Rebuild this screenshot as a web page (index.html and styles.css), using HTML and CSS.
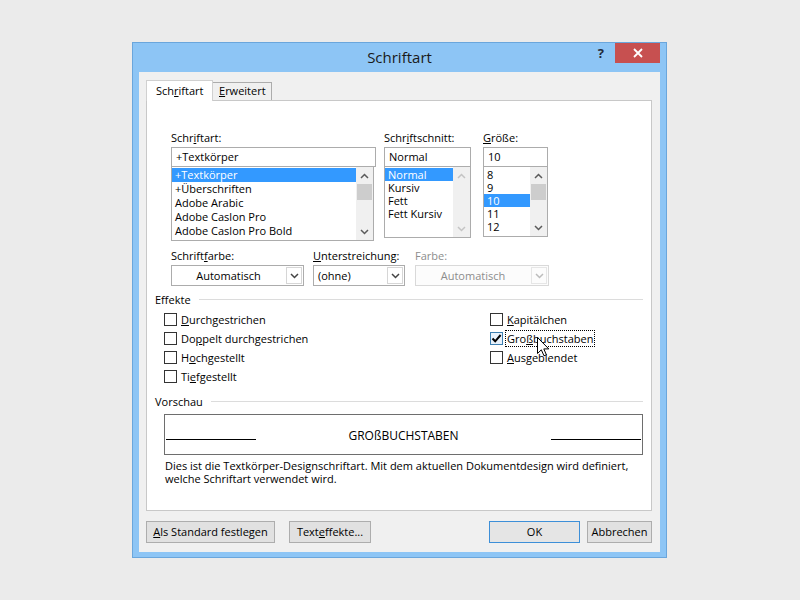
FILE: index.html
```html
<!DOCTYPE html>
<html lang="de">
<head>
<meta charset="utf-8">
<title>Schriftart</title>
<link rel="stylesheet" href="styles.css">
</head>
<body>
<div class="dialog">
  <div class="titlebar">
    <div></div>
    <div class="title">Schriftart</div>
    <div class="controls">
      <span class="help">?</span>
      <div class="close"><svg width="10" height="10" viewBox="0 0 10 10"><path d="M1 1L9 9M9 1L1 9" stroke="#fff" stroke-width="1.8"/></svg></div>
    </div>
  </div>
  <div class="client">
    <div class="tabs">
      <div class="tab active">Sch<u>r</u>iftart</div>
      <div class="tab"><u>E</u>rweitert</div>
    </div>
    <div class="panel">
      <div class="fontrow">
        <div class="col col-font">
          <div class="lbl">Schr<u>i</u>ftart:</div>
          <div class="input">+Textkörper</div>
          <div class="list list-font">
            <div class="items rows14">
              <div class="item sel">+Textkörper</div>
              <div class="item">+Überschriften</div>
              <div class="item">Adobe Arabic</div>
              <div class="item">Adobe Caslon Pro</div>
              <div class="item">Adobe Caslon Pro Bold</div>
            </div>
            <div class="sb">
              <div class="sbtn"><svg width="9" height="6" viewBox="0 0 9 6"><path d="M1 5L4.5 1.5L8 5" fill="none" stroke="#5a5a5a" stroke-width="1.5"/></svg></div>
              <div class="thumb"></div>
              <div class="sbfill"></div>
              <div class="sbtn"><svg width="9" height="6" viewBox="0 0 9 6"><path d="M1 1L4.5 4.5L8 1" fill="none" stroke="#5a5a5a" stroke-width="1.5"/></svg></div>
            </div>
          </div>
        </div>
        <div class="col col-style">
          <div class="lbl">Schr<u>i</u>ftschnitt:</div>
          <div class="input">Normal</div>
          <div class="list list-style">
            <div class="items rows13">
              <div class="item sel">Normal</div>
              <div class="item">Kursiv</div>
              <div class="item">Fett</div>
              <div class="item">Fett Kursiv</div>
            </div>
            <div class="sb">
              <div class="sbtn"><svg width="9" height="6" viewBox="0 0 9 6"><path d="M1 5L4.5 1.5L8 5" fill="none" stroke="#c4c4c4" stroke-width="1.5"/></svg></div>
              <div class="sbfill"></div>
              <div class="sbtn"><svg width="9" height="6" viewBox="0 0 9 6"><path d="M1 1L4.5 4.5L8 1" fill="none" stroke="#c4c4c4" stroke-width="1.5"/></svg></div>
            </div>
          </div>
        </div>
        <div class="col col-size">
          <div class="lbl"><u>G</u>röße:</div>
          <div class="input">10</div>
          <div class="list list-size">
            <div class="items rows13">
              <div class="item">8</div>
              <div class="item">9</div>
              <div class="item sel">10</div>
              <div class="item">11</div>
              <div class="item">12</div>
            </div>
            <div class="sb">
              <div class="sbtn"><svg width="9" height="6" viewBox="0 0 9 6"><path d="M1 5L4.5 1.5L8 5" fill="none" stroke="#5a5a5a" stroke-width="1.5"/></svg></div>
              <div class="thumb"></div>
              <div class="sbfill"></div>
              <div class="sbtn"><svg width="9" height="6" viewBox="0 0 9 6"><path d="M1 1L4.5 4.5L8 1" fill="none" stroke="#5a5a5a" stroke-width="1.5"/></svg></div>
            </div>
          </div>
        </div>
      </div>

      <div class="comborow">
        <div class="ccol c1">
          <div class="lbl">Schrift<u>f</u>arbe:</div>
          <div class="combo"><span class="ctext center">Automatisch</span><span class="cbtn"><svg width="9" height="6" viewBox="0 0 9 6"><path d="M1 1L4.5 4.5L8 1" fill="none" stroke="#444" stroke-width="1.5"/></svg></span></div>
        </div>
        <div class="ccol c2">
          <div class="lbl"><u>U</u>nterstreichung:</div>
          <div class="combo"><span class="ctext">(ohne)</span><span class="cbtn"><svg width="9" height="6" viewBox="0 0 9 6"><path d="M1 1L4.5 4.5L8 1" fill="none" stroke="#444" stroke-width="1.5"/></svg></span></div>
        </div>
        <div class="ccol c3">
          <div class="lbl disabled">Farbe:</div>
          <div class="combo off"><span class="ctext center">Automatisch</span><span class="cbtn"><svg width="9" height="6" viewBox="0 0 9 6"><path d="M1 1L4.5 4.5L8 1" fill="none" stroke="#bcbcbc" stroke-width="1.5"/></svg></span></div>
        </div>
      </div>

      <div class="group g-eff"><span>Effekte</span><span class="gline"></span></div>
      <div class="effects">
        <div class="ecol">
          <div class="cbrow"><span class="box"></span><span class="cl"><u>D</u>urchgestrichen</span></div>
          <div class="cbrow"><span class="box"></span><span class="cl">Do<u>p</u>pelt durchgestrichen</span></div>
          <div class="cbrow"><span class="box"></span><span class="cl">H<u>o</u>chgestellt</span></div>
          <div class="cbrow"><span class="box"></span><span class="cl">Ti<u>e</u>fgestellt</span></div>
        </div>
        <div class="ecol">
          <div class="cbrow"><span class="box"></span><span class="cl"><u>K</u>apitälchen</span></div>
          <div class="cbrow"><span class="box checked"><svg width="11" height="11" viewBox="0 0 11 11"><path d="M1.5 5.5L4.2 8.3L9.6 2" fill="none" stroke="#000" stroke-width="2"/></svg></span><span class="cl focus">Gro<u>ß</u>buchstaben<svg class="cursor" width="13" height="20" viewBox="0 0 13 20"><path d="M0.5 0.5V16.5L4.3 12.8L7 18.8L9.4 17.8L6.8 11.9H11.8Z" fill="#fff" stroke="#000" stroke-width="1" stroke-linejoin="miter"/></svg></span></div>
          <div class="cbrow"><span class="box"></span><span class="cl"><u>A</u>usgeblendet</span></div>
        </div>
      </div>

      <div class="group g-prev"><span>Vorschau</span><span class="gline"></span></div>
      <div class="preview">
        <span class="pline"></span>
        <span class="ptext">GROßBUCHSTABEN</span>
        <span class="pline"></span>
      </div>
      <p class="desc">Dies ist die Textkörper-Designschriftart. Mit dem aktuellen Dokumentdesign wird definiert,<br>welche Schriftart verwendet wird.</p>
    </div>

    <div class="buttons">
      <div class="btn b-std"><u>A</u>ls Standard festlegen</div>
      <div class="btn b-fx">Text<u>e</u>ffekte...</div>
      <div class="btn b-ok">OK</div>
      <div class="btn b-cancel">Abbrechen</div>
    </div>
  </div>
</div>
</body>
</html>
```

FILE: styles.css
```css
* { box-sizing: border-box; }
html, body { margin: 0; padding: 0; }
body {
  background: #ebebeb;
  font-family: "Open Sans", "Noto Sans", sans-serif;
  font-size: 11px;
  color: #000;
  width: 800px;
  height: 600px;
  overflow: hidden;
}
u { text-decoration: underline; text-underline-offset: 1px; }

.dialog {
  margin: 42px 0 0 132px;
  width: 535px;
  height: 516px;
  border: 1px solid #6aa6dc;
  background: #8dc5f5;
  display: flex;
  flex-direction: column;
}

.titlebar {
  height: 29px;
  display: grid;
  grid-template-columns: 1fr auto 1fr;
}
.title {
  font-size: 15px;
  line-height: 29px;
  color: #1a1a1a;
}
.controls {
  justify-self: end;
  display: flex;
  align-items: flex-start;
  margin-right: 6px;
}
.help {
  font-weight: bold;
  font-size: 13px;
  line-height: 15px;
  margin: 3px 11px 0 0;
  color: #1f2a3a;
}
.close {
  width: 45px;
  height: 20px;
  background: #c75050;
  display: flex;
  align-items: center;
  justify-content: center;
}

.client {
  flex: 1;
  margin: 0 6px 5px 6px;
  background: #f0f0f0;
  padding: 8px 8px 0 7px;
  display: flex;
  flex-direction: column;
}

.tabs {
  height: 20px;
  display: flex;
  align-items: flex-end;
  position: relative;
  z-index: 1;
}
.tab {
  height: 18px;
  line-height: 16px;
  padding: 0 6px;
  width: 59px;
  border: 1px solid #acacac;
  border-bottom: none;
  border-left: none;
  background: #f0f0f0;
}
.tab.active {
  height: 21px;
  margin-bottom: -1px;
  line-height: 19px;
  width: 67px;
  padding: 0 0 0 9px;
  background: #fff;
  border: 1px solid #d0d0d0;
  border-bottom: none;
}

.panel {
  height: 411px;
  background: #fff;
  border: 1px solid #c8c8c8;
  padding-top: 29px;
}

.lbl { height: 17px; line-height: 16px; white-space: nowrap; }
.lbl.disabled { color: #8d8d8d; }

.fontrow {
  display: flex;
  align-items: flex-start;
  padding-left: 24px;
}
.col-font { width: 205px; }
.col-style { width: 87px; margin-left: 8px; }
.col-size { width: 65px; margin-left: 12px; }

.input {
  height: 20px;
  border: 1px solid #acacac;
  line-height: 18px;
  padding-left: 4px;
  white-space: nowrap;
}
.list {
  border: 1px solid #acacac;
  border-top: none;
  display: flex;
  overflow: hidden;
}
.list-font { height: 74px; width: 203px; }
.list-style { height: 71px; }
.list-size { height: 70px; }
.items { flex: 1; padding-top: 1px; white-space: nowrap; }
.rows14 .item { height: 14px; line-height: 14px; padding-left: 3px; }
.rows13 .item { height: 13px; line-height: 13px; padding-left: 3px; }
.item.sel { background: #3399ff; color: #fff; }

.sb {
  width: 17px;
  background: #f0f0f0;
  display: flex;
  flex-direction: column;
}
.sbtn {
  height: 17px;
  display: flex;
  align-items: center;
  justify-content: center;
}
.thumb {
  height: 16px;
  margin: 0 1px;
  background: #cdcdcd;
}
.sbfill { flex: 1; }

.comborow {
  display: flex;
  margin-top: 7px;
  padding-left: 24px;
}
.c1 { width: 133px; }
.c2 { width: 92px; margin-left: 9px; }
.c3 { width: 134px; margin-left: 10px; }
.combo {
  height: 21px;
  border: 1px solid #acacac;
  background: #fff;
  display: flex;
  align-items: stretch;
}
.ctext { flex: 1; line-height: 19px; padding-left: 4px; white-space: nowrap; }
.ctext.center { text-align: center; padding-left: 0; }
.cbtn {
  width: 16px;
  margin: 1px;
  border: 1px solid #d6d6d6;
  display: flex;
  align-items: center;
  justify-content: center;
}
.combo.off { border-color: #d9d9d9; background: #fcfcfc; color: #8d8d8d; }
.combo.off .cbtn { border-color: #e6e6e6; }

.group {
  display: flex;
  align-items: center;
  height: 17px;
  line-height: 17px;
  padding: 0 8px 0 8px;
}
.g-eff { margin-top: 5px; }
.g-prev { margin-top: 7px; }
.gline {
  flex: 1;
  height: 1px;
  background: #dcdcdc;
  margin-left: 8px;
  margin-top: -1px;
}

.effects {
  display: grid;
  grid-template-columns: 326px 1fr;
  padding-left: 17px;
  margin-top: 2px;
}
.cbrow {
  height: 19px;
  display: flex;
  align-items: center;
}
.box {
  width: 13px;
  height: 13px;
  border: 1px solid #333;
  background: #fff;
  margin-right: 2px;
  display: flex;
  align-items: center;
  justify-content: center;
}
.box.checked { border-color: #3c7fb1; background: #e8f2fc; }
.cl {
  border: 1px dotted transparent;
  padding: 0 1px;
  line-height: 15px;
  white-space: nowrap;
}
.cl.focus { border-color: #000; position: relative; }
.cursor { position: absolute; left: 31px; top: 6px; }

.preview {
  margin: 4px 8px 0 17px;
  height: 41px;
  border: 1px solid #6e6e6e;
  display: flex;
  align-items: center;
  justify-content: space-between;
  padding: 0 1px;
}
.pline {
  width: 90px;
  height: 1px;
  background: #000;
  margin-top: 9px;
}
.ptext { font-size: 12px; margin-top: 1px; }

.desc {
  margin: 4px 0 0 0;
  padding-left: 18px;
  line-height: 13px;
  white-space: nowrap;
}

.buttons {
  display: flex;
  margin-top: 10px;
}
.btn {
  height: 22px;
  line-height: 20px;
  border: 1px solid #adadad;
  background: #e1e1e1;
  text-align: center;
  white-space: nowrap;
}
.b-std { width: 129px; }
.b-fx { width: 82px; margin-left: 14px; }
.b-ok { width: 91px; margin-left: auto; border-color: #3d8fd8; background: #e5e5e5; }
.b-cancel { width: 65px; margin-left: 7px; }
```
